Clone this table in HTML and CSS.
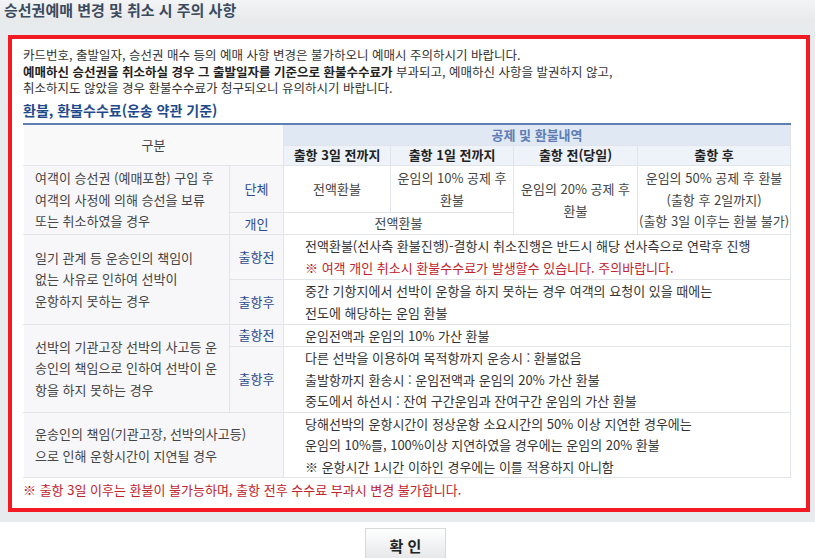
FILE: index.html
```html
<!DOCTYPE html>
<html lang="ko">
<head>
<meta charset="utf-8">
<link rel="stylesheet" href="styles.css">
</head>
<body>
<div class="titlebar">승선권예매 변경 및 취소 시 주의 사항</div>
<div class="panel">
  <div class="notice">
    <div class="intro">
      <div class="iln">카드번호, 출발일자, 승선권 매수 등의 예매 사항 변경은 불가하오니 예매시 주의하시기 바랍니다.</div>
      <div class="iln"><b>예매하신 승선권을 취소하실 경우 그 출발일자를 기준으로 환불수수료가</b> 부과되고, 예매하신 사항을 발권하지 않고,</div>
      <div class="iln">취소하지도 않았을 경우 환불수수료가 청구되오니 유의하시기 바랍니다.</div>
    </div>
    <h3 class="heading">환불, 환불수수료(운송 약관 기준)</h3>
    <table class="fee">
      <colgroup>
        <col class="c1"><col class="c2"><col class="c3"><col class="c4"><col class="c5"><col class="c6">
      </colgroup>
      <tr class="r-group">
        <th class="gubun" rowspan="2" colspan="2">구분</th>
        <th class="group" colspan="4">공제 및 환불내역</th>
      </tr>
      <tr class="subhead">
        <th>출항 3일 전까지</th>
        <th>출항 1일 전까지</th>
        <th>출항 전(당일)</th>
        <th>출항 후</th>
      </tr>
      <tr>
        <td class="case" rowspan="2"><div class="ln">여객이 승선권 (예매포함) 구입 후</div><div class="ln">여객의 사정에 의해 승선을 보류</div><div class="ln">또는 취소하였을 경우</div></td>
        <td class="sub"><div class="box46">단체</div></td>
        <td class="val">전액환불</td>
        <td class="val"><div class="ln">운임의 10% 공제 후</div><div class="ln">환불</div></td>
        <td class="val" rowspan="2"><div class="ln">운임의 20% 공제 후</div><div class="ln">환불</div></td>
        <td class="val" rowspan="2"><div class="ln">운임의 50% 공제 후 환불</div><div class="ln">(출항 후 2일까지)</div><div class="ln">(출항 3일 이후는 환불 불가)</div></td>
      </tr>
      <tr>
        <td class="sub"><div class="box21">개인</div></td>
        <td class="val" colspan="2">전액환불</td>
      </tr>
      <tr>
        <td class="case" rowspan="2"><div class="ln">일기 관계 등 운송인의 책임이</div><div class="ln">없는 사유로 인하여 선박이</div><div class="ln">운항하지 못하는 경우</div></td>
        <td class="sub">출항전</td>
        <td class="desc" colspan="4"><div class="dl22">전액환불(선사측 환불진행)-결항시 취소진행은 반드시 해당 선사측으로 연락후 진행</div><div class="dl22 warn">※ 여객 개인 취소시 환불수수료가 발생할수 있습니다. 주의바랍니다.</div></td>
      </tr>
      <tr>
        <td class="sub">출항후</td>
        <td class="desc" colspan="4"><div class="dl22">중간 기항지에서 선박이 운항을 하지 못하는 경우 여객의 요청이 있을 때에는</div><div class="dl22">전도에 해당하는 운임 환불</div></td>
      </tr>
      <tr>
        <td class="case" rowspan="2"><div class="ln">선박의 기관고장 선박의 사고등 운</div><div class="ln">송인의 책임으로 인하여 선박이 운</div><div class="ln">항을 하지 못하는 경우</div></td>
        <td class="sub">출항전</td>
        <td class="desc" colspan="4"><div class="dl">운임전액과 운임의 10% 가산 환불</div></td>
      </tr>
      <tr>
        <td class="sub">출항후</td>
        <td class="desc" colspan="4"><div class="dl">다른 선박을 이용하여 목적항까지 운송시 : 환불없음</div><div class="dl">출발항까지 환송시 : 운임전액과 운임의 20% 가산 환불</div><div class="dl">중도에서 하선시 : 잔여 구간운임과 잔여구간 운임의 가산 환불</div></td>
      </tr>
      <tr>
        <td class="case" colspan="2"><div class="ln">운송인의 책임(기관고장, 선박의사고등)</div><div class="ln">으로 인해 운항시간이 지연될 경우</div></td>
        <td class="desc" colspan="4"><div class="dl">당해선박의 운항시간이 정상운항 소요시간의 50% 이상 지연한 경우에는</div><div class="dl">운임의 10%를, 100%이상 지연하였을 경우에는 운임의 20% 환불</div><div class="dl">※ 운항시간 1시간 이하인 경우에는 이를 적용하지 아니함</div></td>
      </tr>
    </table>
    <p class="footnote">※ 출항 3일 이후는 환불이 불가능하며, 출항 전후 수수료 부과시 변경 불가합니다.</p>
  </div>
</div>
<div class="actions">
  <button class="confirm" type="button">확 인</button>
</div>
</body>
</html>
```

FILE: styles.css
```css
* { box-sizing: border-box; }
html, body { margin: 0; padding: 0; background: #ffffff; }
body {
  font-family: "Noto Sans CJK KR", "Noto Sans", sans-serif;
  font-size: 13px;
  color: #333333;
}
.titlebar {
  height: 22px;
  padding-left: 4px;
  line-height: 20px;
  font-size: 15px;
  font-weight: bold;
  color: #3b4b5e;
  background: linear-gradient(#f3f4f5, #e7e9eb);
}
.panel {
  background: #e8ebee;
  padding: 13px 5px 10px 8px;
}
.notice {
  background: #ffffff;
  border: 4px solid #f21a23;
  padding: 8px 12px 8px 11px;
  height: 477px;
}
.intro {
  font-size: 12.5px;
  color: #333;
}
.iln {
  height: 16.5px;
  line-height: 16.5px;
  white-space: nowrap;
}
.intro b { color: #222; }
.heading {
  margin: 4px 0 4px 0;
  height: 18px;
  font-size: 14px;
  line-height: 18px;
  color: #1e4a8c;
  font-weight: bold;
}
.fee {
  width: 767px;
  border-collapse: collapse;
  table-layout: fixed;
  border-top: 2px solid #5d7fb3;
  font-size: 13px;
}
.c1 { width: 206px; }
.c2 { width: 54px; }
.c3 { width: 107px; }
.c4 { width: 123px; }
.c5 { width: 124px; }
.c6 { width: 153px; }
.fee th, .fee td {
  border: 1px solid #e1e5ea;
  padding: 0 1px;
  line-height: 20px;
  text-align: center;
  vertical-align: middle;
  white-space: nowrap;
}
.ln { height: 21.5px; line-height: 21.5px; }
.dl { height: 21.5px; line-height: 21.5px; }
.dl22 { height: 22px; line-height: 22px; }
.box46 { height: 46px; line-height: 46px; }
.box21 { height: 21px; line-height: 21px; }
.fee th.gubun {
  background: #f9f9fa;
  font-weight: normal;
  color: #444;
  border-left-color: #ffffff;
}
.fee th.group {
  background: #dfe8f3;
  color: #5e7db3;
  font-weight: bold;
  height: 21px;
}
.fee .subhead th {
  background: #eef3f9;
  color: #222;
  font-weight: bold;
  height: 20px;
  line-height: 18px;
}
.fee td.case {
  text-align: left;
  padding: 0 2px 0 11px;
  background: #f7f7f9;
  color: #444;
  border-left-color: #ffffff;
}
.fee td.sub {
  background: #f7f7f9;
  color: #2c4a8c;
}
.fee td.val { color: #444; }
.fee td.desc {
  text-align: left;
  padding: 0 2px 0 21px;
  color: #333;
}
.warn { color: #c0222c; }
.footnote {
  margin: 0;
  padding-top: 3px;
  height: 21px;
  line-height: 18px;
  color: #c0222c;
  font-size: 13px;
  white-space: nowrap;
}
.actions {
  display: flex;
  justify-content: center;
  padding-top: 6px;
  padding-right: 4px;
}
.confirm {
  width: 81px;
  height: 34px;
  border: 1px solid #d6d8da;
  background: linear-gradient(#ffffff, #e3e5e7);
  font-family: "Noto Sans CJK KR", sans-serif;
  font-size: 15px;
  font-weight: bold;
  color: #222;
  padding: 0;
}
```
